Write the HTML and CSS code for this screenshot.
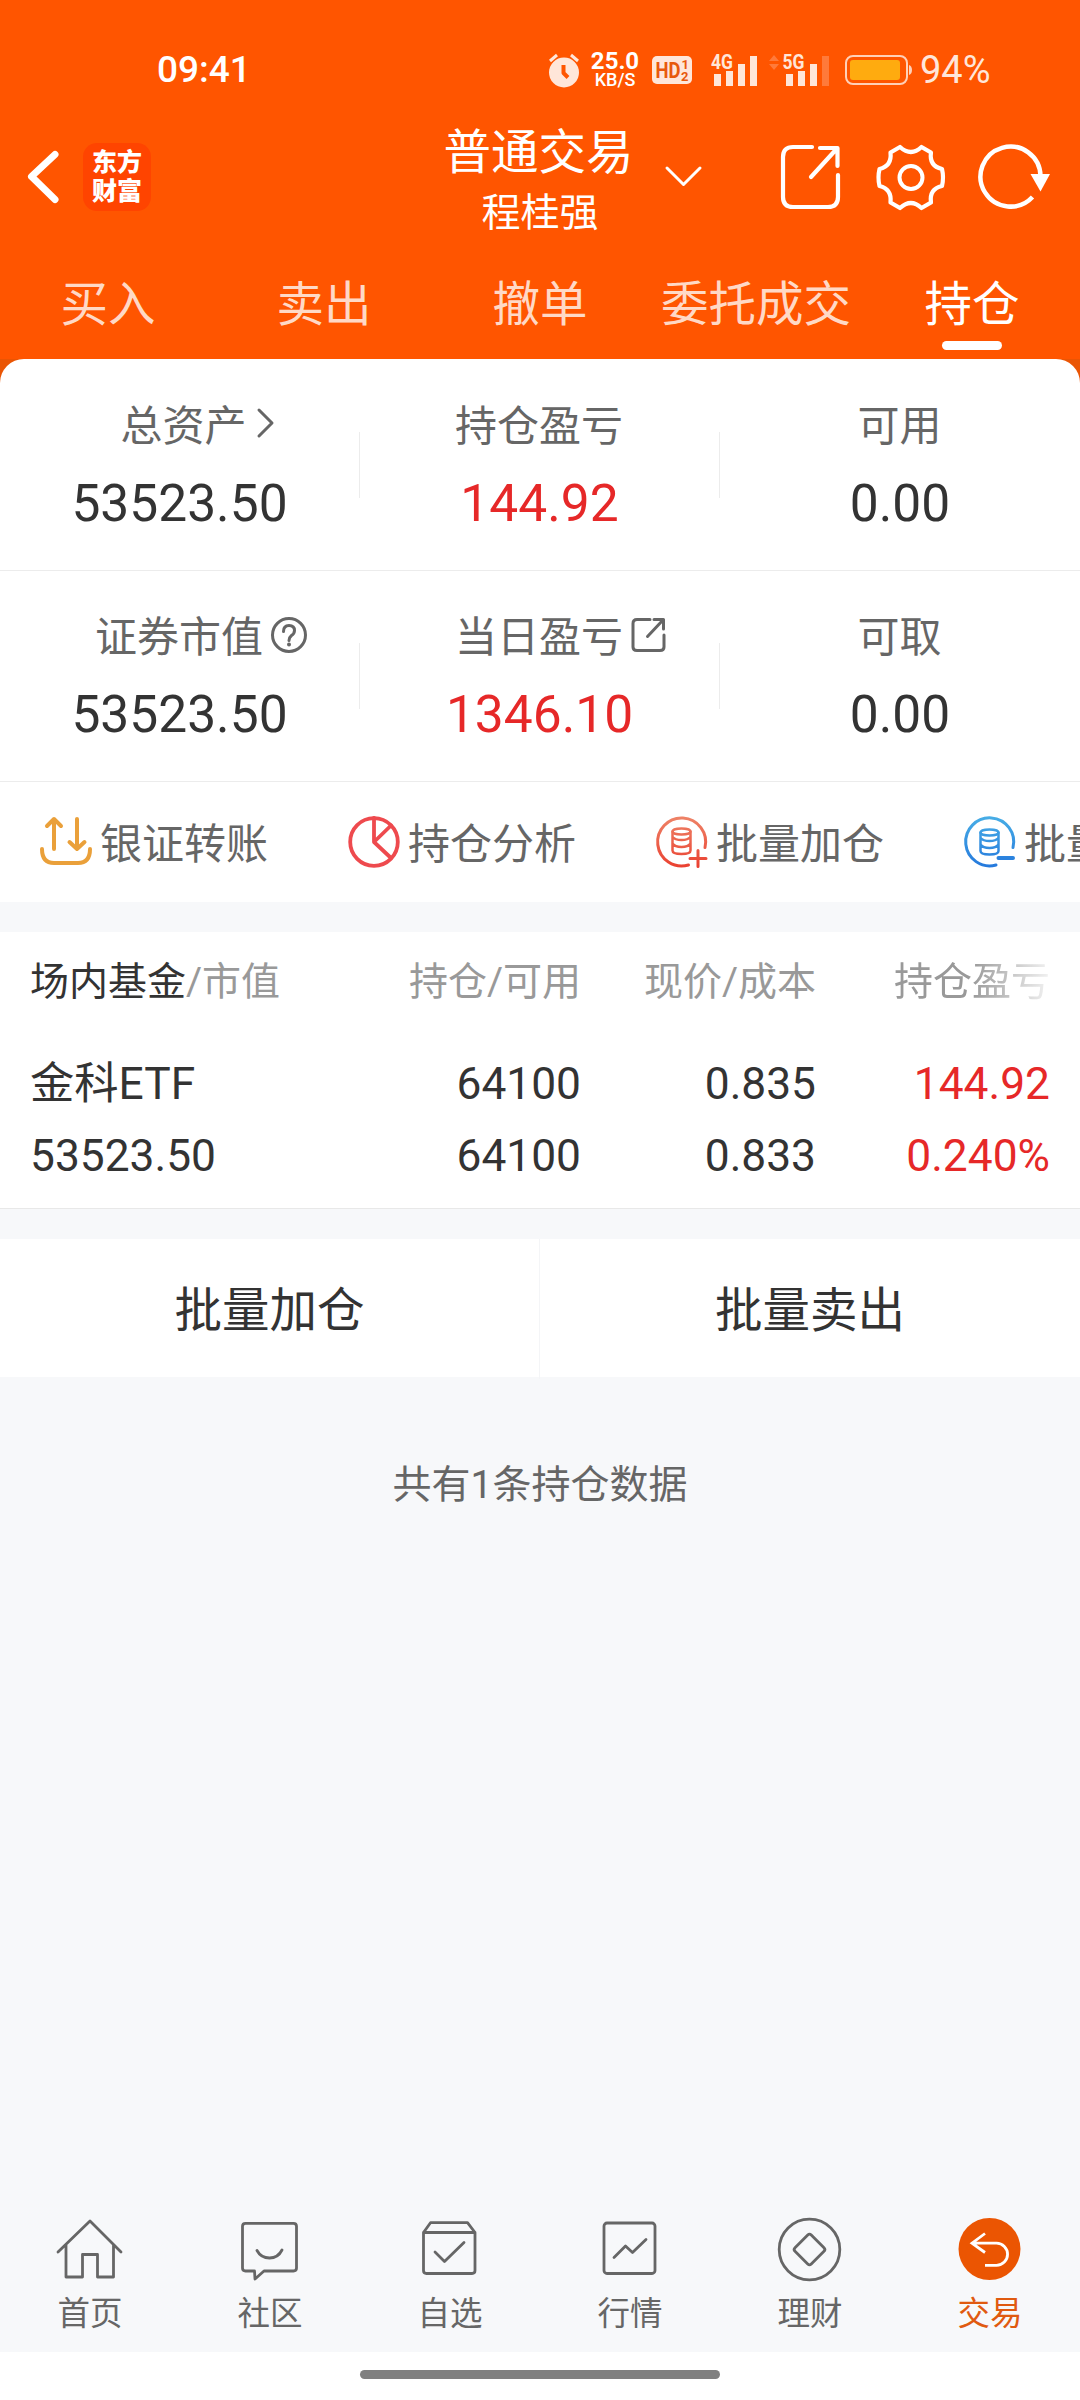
FILE: index.html
```html
<!DOCTYPE html>
<html lang="zh-CN">

<head>
    <meta charset="UTF-8">
    <meta name="viewport" content="width=device-width, initial-scale=1.0">
    <title>普通交易 - 持仓</title>
    <link rel="stylesheet" href="styles.css">
</head>

<body>

    <div class="top">
        <div class="status-bar">
            <span class="time">09:41</span>
            <div class="status-icons">
                <svg class="alarm" width="32" height="34" viewBox="0 0 32 34">
                    <circle cx="16" cy="19.5" r="15" fill="#ffe6d9" />
                    <path d="M2 8 L9 2 M30 8 L23 2" stroke="#ffe6d9" stroke-width="3" fill="none" />
                    <path d="M15.500 12 V20 L20 24.500" stroke="#ff5500" stroke-width="4" fill="none" />
                </svg>
                <div class="speed">
                    <span class="speed-value">25.0</span>
                    <span class="speed-unit">KB/S</span>
                </div>
                <svg class="hd" width="40" height="28" viewBox="0 0 40 28">
                    <rect width="40" height="28" rx="5" fill="#ffe6d9" />
                    <text x="3.500" y="22" font-size="22" textLength="25" lengthAdjust="spacingAndGlyphs">HD</text>
                    <text x="29.500" y="13" font-size="13">1</text>
                    <text x="29" y="25" font-size="13">2</text>
                </svg>
                <svg class="signal" width="47" height="34" viewBox="0 0 47 34">
                    <text x="0" y="15.500" font-size="21" textLength="22" lengthAdjust="spacingAndGlyphs">4G</text>
                    <path d="M3 21h7v12h-7z M15 18h7v15h-7z M27 11h7v22h-7z M39 3h7v30h-7z" />
                </svg>
                <svg class="signal signal-5g" width="61" height="34" viewBox="0 0 61 34">
                    <path class="faint" d="M0 8 L5 2 L10 8z M0 11 L5 17 L10 11z M53 3h7v30h-7z" />
                    <text x="13.500" y="15.500" font-size="21" textLength="22" lengthAdjust="spacingAndGlyphs">5G</text>
                    <path d="M17 21h7v12h-7z M29 18h7v15h-7z M41 11h7v22h-7z" />
                </svg>
                <svg class="battery" width="68" height="30" viewBox="0 0 68 30">
                    <rect x="1" y="1" width="61" height="28" rx="7" fill="none" stroke="#ffd0b8" stroke-width="2" />
                    <rect x="5" y="5" width="50" height="20" rx="3" fill="#ffab0f" />
                    <path d="M64 10 q3 1 3 5 t-3 5z" fill="#ffd0b8" />
                </svg>
                <span class="percent">94%</span>
            </div>
        </div>

        <div class="header">
            <div class="header-left">
                <svg class="back" width="33" height="54" viewBox="0 0 33 54">
                    <path d="M28 4.500 L4.500 26.500 L28 49.500" />
                </svg>
                <div class="logo">东方<br>财富</div>
            </div>
            <div class="title">
                <div class="title-main">普通交易</div>
                <div class="title-name">程桂强</div>
            </div>
            <div class="header-right">
                <svg class="down" width="38" height="22" viewBox="0 0 38 22">
                    <path d="M2 2 L18.500 18.500 L35 2" stroke-width="3" />
                </svg>
                <svg class="share" width="60" height="64" viewBox="0 0 60 64">
                    <path d="M31 2 H12 Q2 2 2 12 V52 Q2 62 12 62 H47 Q57 62 57 52 V30 M39 3 H56.500 V21 M30 32 L56 3.500" stroke-width="4.200" />
                </svg>
                <svg class="gear" width="68" height="65" viewBox="0 0 68 65">
                    <path d="M23 2 Q34 12 44.500 2 L54 7.500 Q52 21 65 24 Q67 32.500 65 41 Q52 44 54 57.500 L44.500 63 Q34 53 23 63 L13.500 57.500 Q15 44 2.500 41 Q0.500 32.500 2.500 24 Q15 21 13.500 7.500 Z" stroke-width="4.200" />
                    <circle cx="34" cy="32.500" r="11.500" stroke-width="4" />
                </svg>
                <svg class="refresh" width="72" height="65" viewBox="0 0 72 65">
                    <path d="M53.500 52 A30 30 0 1 1 61.500 31" stroke-width="4.500" />
                    <path class="solid" d="M51.500 29 H71 L61.500 46.500z" />
                </svg>
            </div>
        </div>

        <div class="tabs">
            <div class="tab">买入</div>
            <div class="tab">卖出</div>
            <div class="tab">撤单</div>
            <div class="tab">委托成交</div>
            <div class="tab active">持仓</div>
        </div>
    </div>

    <div class="summary-wrap">
        <div class="summary">
            <div class="summary-row">
                <div class="cell">
                    <div class="label label-total">总资产<svg class="more" width="18" height="30" viewBox="0 0 18 30">
                            <path d="M2 2 L15 15 L2 28" />
                        </svg></div>
                    <div class="value">53523.50</div>
                </div>
                <div class="divider"></div>
                <div class="cell">
                    <div class="label">持仓盈亏</div>
                    <div class="value red">144.92</div>
                </div>
                <div class="divider"></div>
                <div class="cell">
                    <div class="label">可用</div>
                    <div class="value">0.00</div>
                </div>
            </div>
            <div class="summary-row">
                <div class="cell">
                    <div class="label">证券市值<svg class="hint" width="36" height="36" viewBox="0 0 36 36">
                            <circle cx="18" cy="18" r="16.500" />
                            <path d="M12.500 14.500 Q12.500 8.500 18 8.500 Q23.500 8.500 23.500 13.500 Q23.500 16.500 20.500 18.500 Q18 20.500 18 23.500" />
                            <circle class="dot" cx="18" cy="27.500" r="2" />
                        </svg></div>
                    <div class="value">53523.50</div>
                </div>
                <div class="divider"></div>
                <div class="cell">
                    <div class="label">当日盈亏<svg class="hint" width="36" height="36" viewBox="0 0 36 36">
                            <path d="M19 2.500 H6 Q2 2.500 2 6.500 V30 Q2 33.500 6 33.500 H29 Q33 33.500 33 30 V18 M23 2.500 H32.500 V12 M16.500 19.500 L32 3" />
                        </svg></div>
                    <div class="value red">1346.10</div>
                </div>
                <div class="divider"></div>
                <div class="cell">
                    <div class="label">可取</div>
                    <div class="value">0.00</div>
                </div>
            </div>
        </div>
    </div>

    <div class="tools">
        <div class="tool">
            <svg width="52" height="52" viewBox="0 0 52 52" stroke="#eaa03a" stroke-width="4">
                <path d="M14 3 V33 M7 10 L14 3 L21 10 M37 3 V33 M29.500 26 L37 33 L44.500 26 M2 33 Q2 47 14 47 H38 Q50 47 50 33" />
            </svg>
            <span>银证转账</span>
        </div>
        <div class="tool">
            <svg width="52" height="52" viewBox="0 0 52 52" stroke="#ee4a4e" stroke-width="3.800">
                <circle cx="26" cy="26" r="23.800" />
                <path d="M26 2 V26 L43 9.500 M26 26 L43 42" />
            </svg>
            <span>持仓分析</span>
        </div>
        <div class="tool">
            <svg width="52" height="52" viewBox="0 0 52 52" stroke="url(#red)" stroke-width="3">
                <defs>
                    <linearGradient id="red" gradientUnits="userSpaceOnUse" x1="0" y1="0" x2="0" y2="52">
                        <stop offset="0" stop-color="#ee8468" />
                        <stop offset="1" stop-color="#ea4030" />
                    </linearGradient>
                </defs>
                <path d="M49 31.500 A24 24 0 1 0 32.500 49" />
                <path d="M16.500 15.500 V34.500 Q16.500 38 25.500 38 T34.500 34.500 V15.500 M16.500 21 Q19 24 25.500 24 T34.500 21 M16.500 27.500 Q19 31 25.500 31 T34.500 27.500" stroke-width="2.500" />
                <ellipse cx="25.500" cy="15.500" rx="9" ry="3" stroke-width="2.500" />
                <path d="M34 42.500 H50 M42 34.500 V50.500" />
            </svg>
            <span>批量加仓</span>
        </div>
        <div class="tool">
            <svg width="52" height="52" viewBox="0 0 52 52" stroke="url(#blue)" stroke-width="3">
                <defs>
                    <linearGradient id="blue" gradientUnits="userSpaceOnUse" x1="0" y1="0" x2="0" y2="52">
                        <stop offset="0" stop-color="#48aee6" />
                        <stop offset="1" stop-color="#2478dc" />
                    </linearGradient>
                </defs>
                <path d="M49 31.500 A24 24 0 1 0 32 49" />
                <path d="M16.500 16.500 V35 Q16.500 38.500 25.500 38.500 T34.500 35 V16.500 M16.500 22 Q19 25 25.500 25 T34.500 22 M16.500 28.500 Q19 32 25.500 32 T34.500 28.500" stroke-width="2.500" />
                <ellipse cx="25.500" cy="16.500" rx="9" ry="3" stroke-width="2.500" />
                <path d="M34.500 42 L49 41.900" stroke-width="4" />
            </svg>
            <span>批量卖出</span>
        </div>
    </div>

    <div class="holdings">
        <div class="grid grid-head">
            <div><span class="dark">场内基金</span>/市值</div>
            <div>持仓/可用</div>
            <div>现价/成本</div>
            <div class="fade">持仓盈亏</div>
        </div>
        <div class="grid">
            <div>金科ETF</div>
            <div>64100</div>
            <div>0.835</div>
            <div class="red">144.92</div>
            <div>53523.50</div>
            <div>64100</div>
            <div>0.833</div>
            <div class="red">0.240%</div>
        </div>
    </div>

    <div class="actions">
        <div class="action">批量加仓</div>
        <div class="action">批量卖出</div>
    </div>

    <p class="count">共有1条持仓数据</p>

    <div class="nav">
        <div class="nav-item">
            <svg width="70" height="70" viewBox="0 0 70 70">
                <path d="M3 38 L35 7 L66 38 M11 31 V63 H27.500 V40.500 H42.500 V63 H58.500 V31" />
            </svg>
            <span>首页</span>
        </div>
        <div class="nav-item">
            <svg width="70" height="70" viewBox="0 0 70 70">
                <path d="M10.500 9.300 H58.500 Q61.500 9.300 61.500 12.300 V54 Q61.500 57 58.500 57 H29 L20 65 L19.500 57 H10.500 Q7.500 57 7.500 54 V12.300 Q7.500 9.300 10.500 9.300z M22 36.500 Q26 44 34.500 44 T47 36" />
            </svg>
            <span>社区</span>
        </div>
        <div class="nav-item">
            <svg width="70" height="70" viewBox="0 0 70 70">
                <path d="M8.500 18.500 L15.500 8.700 H52.500 L60 18.500 V56.500 Q60 59.500 57 59.500 H11.500 Q8.500 59.500 8.500 56.500z M8.500 18.500 H60 M20 38 L29.500 47.500 L49 28.500" />
            </svg>
            <span>自选</span>
        </div>
        <div class="nav-item">
            <svg width="70" height="70" viewBox="0 0 70 70">
                <rect x="9" y="9" width="51" height="50.500" rx="3" />
                <path d="M19 43.500 L30.500 32 L37.500 38.500 L51 25.500" />
            </svg>
            <span>行情</span>
        </div>
        <div class="nav-item">
            <svg width="70" height="70" viewBox="0 0 70 70">
                <circle cx="34.500" cy="35.500" r="30.300" />
                <rect x="23" y="24" width="23" height="23" rx="2.500" transform="rotate(45 34.500 35.500)" />
            </svg>
            <span>理财</span>
        </div>
        <div class="nav-item current">
            <svg width="70" height="70" viewBox="0 0 70 70">
                <circle class="disc" cx="34.500" cy="35" r="31" />
                <path class="arrow" d="M30 19.500 L17 29.200 L30 38.500 M17 29.200 H41.500 A11 11 0 0 1 41.500 51.300 H30" />
            </svg>
            <span>交易</span>
        </div>
    </div>

    <div class="home-bar">
        <div class="home-handle"></div>
    </div>

</body>

</html>
```

FILE: styles.css
```css
* {
    box-sizing: border-box;
}

body {
    margin: 0;
    width: 1080px;
    height: 2400px;
    display: flex;
    flex-direction: column;
    overflow: hidden;
    font-family: Roboto, "Noto Sans CJK SC", sans-serif;
    color: #333;
    background-color: #f7f8fa;
}

svg {
    display: block;
    flex: none;
    fill: none;
    overflow: visible;
    stroke-linecap: round;
    stroke-linejoin: round;
}

/* orange header */
.top {
    height: 359px;
    flex: none;
    background-color: #ff5500;
    color: #fff;
}

.status-bar {
    height: 118px;
    padding: 21px 86px 0 157px;
    display: flex;
    align-items: center;
    justify-content: space-between;
    font-size: 37px;
}

.time {
    font-weight: 500;
}

.status-icons {
    display: flex;
    align-items: center;
    color: #ffe6d9;
}

.status-icons svg {
    stroke-linecap: butt;
}

.speed {
    width: 52px;
    margin: 0 11px 0 9px;
    display: flex;
    flex-direction: column;
    align-items: center;
    color: #fff;
    font-weight: 700;
}

.speed-value {
    font-size: 24px;
    line-height: 20px;
}

.speed-unit {
    font-size: 18px;
    line-height: 18px;
    font-weight: 500;
}

.hd {
    margin-right: 19px;
}

.hd text {
    fill: #e8590c;
    font-weight: 700;
}

.signal {
    margin-right: 11px;
    fill: #ffe6d9;
    font-weight: 700;
}

.signal-5g {
    margin-right: 15px;
}

.signal .faint {
    fill: #ff7a3a;
}

.percent {
    width: 74px;
    margin-left: 7px;
    font-size: 38px;
}

.header {
    height: 118px;
    display: grid;
    grid-template-columns: 446px 188px 446px;
    grid-template-rows: 118px;
    align-items: center;
}

.header-left,
.header-right {
    display: flex;
    align-items: center;
}

.header svg {
    stroke: #fff;
}

.back {
    margin: 0 23px 0 27px;
    stroke-width: 7;
}

.logo {
    width: 68px;
    height: 68px;
    padding-top: 5px;
    border-radius: 14px;
    background-color: #ff4400;
    font-size: 25px;
    line-height: 29px;
    font-weight: 900;
    text-align: center;
}

.title {
    align-self: start;
    padding-top: 5px;
    text-align: center;
    white-space: nowrap;
}

.title-main {
    margin-left: -3px;
    font-size: 47.5px;
    line-height: 60px;
}

.title-name {
    margin-top: 5px;
    font-size: 39px;
    line-height: 50px;
}

.down {
    margin: 0 78px 0 31px;
}

.share {
    margin-right: 36px;
}

.gear {
    margin-right: 34px;
}

.refresh {
    stroke-linecap: butt;
}

.refresh .solid {
    fill: #fff;
    stroke: none;
}

.tabs {
    display: grid;
    grid-template-columns: repeat(5, 1fr);
    padding-top: 39px;
}

.tab {
    display: flex;
    flex-direction: column;
    align-items: center;
    font-size: 47.5px;
    line-height: 60px;
    color: #ffd9c6;
}

.tab.active {
    color: #fff;
}

.tab.active::after {
    content: "";
    width: 60px;
    height: 9px;
    margin-top: 6px;
    border-radius: 5px;
    background-color: #fff;
}

/* account summary */
.summary-wrap {
    flex: none;
    background-color: #ea5504;
}

.summary {
    padding-top: 1px;
    background-color: #fff;
    border-radius: 24px 24px 0 0;
}

.summary-row {
    height: 211px;
    display: grid;
    grid-template-columns: 359px 1px 359px 1px 360px;
    align-items: center;
    border-bottom: 1px solid #ececec;
}

.cell {
    height: 210px;
    padding-top: 37px;
}

.divider {
    height: 66px;
    background-color: #ececec;
}

.label {
    display: flex;
    justify-content: center;
    align-items: center;
    margin-left: -1px;
    font-size: 42px;
    line-height: 60px;
    color: #666;
}

.label-total {
    padding-left: 9px;
}

/* icons hang outside so the caption itself stays centred */
.label svg {
    stroke: #666;
    stroke-width: 3;
    margin: -6px -44px 0 8px;
}

.label .more {
    margin: -8px -28px 0 10px;
}

.label .dot {
    fill: #666;
    stroke: none;
}

.value {
    margin-top: 17px;
    font-size: 51.5px;
    line-height: 60px;
    text-align: center;
}

.red {
    color: #e62828;
}

/* shortcuts */
.tools {
    height: 120px;
    flex: none;
    display: flex;
    align-items: center;
    gap: 80px;
    padding-left: 40px;
    background-color: #fff;
    overflow: hidden;
}

.tool {
    flex: none;
    display: flex;
    align-items: center;
    gap: 8px;
    font-size: 42px;
    line-height: 60px;
    color: #666;
}

.tool span {
    padding-top: 5px;
}

/* holdings table */
.holdings {
    flex: none;
    height: 277px;
    margin-top: 30px;
    padding: 25px 30px 0;
    background-color: #fff;
    border-bottom: 1px solid #e8e8e8;
}

.grid {
    display: grid;
    grid-template-columns: 316px 235px 235px 234px;
    row-gap: 12px;
    font-size: 44.3px;
    line-height: 60px;
    text-align: right;
    white-space: nowrap;
}

.grid div:nth-child(4n + 1) {
    text-align: left;
}

.grid-head {
    margin-bottom: 47px;
    font-size: 39px;
    line-height: 50px;
    color: #999;
}

.dark {
    color: #333;
}

.fade {
    -webkit-mask-image: linear-gradient(to right, #000 155px, transparent 245px);
    mask-image: linear-gradient(to right, #000 155px, transparent 245px);
}

.actions {
    flex: none;
    height: 138px;
    margin-top: 30px;
    display: grid;
    grid-template-columns: 540px 540px;
    background-color: #fff;
}

.action {
    padding-top: 4px;
    font-size: 47.5px;
    line-height: 136px;
    text-align: center;
}

.action:first-child {
    border-right: 1px solid #f4f5f7;
}

.count {
    flex: none;
    margin: 83px 0 0;
    font-size: 39px;
    line-height: 50px;
    text-align: center;
    color: #666;
}

/* bottom navigation */
.nav {
    flex: none;
    height: 148px;
    margin-top: auto;
    padding-top: 10px;
    display: grid;
    grid-template-columns: repeat(6, 1fr);
}

.nav-item {
    display: flex;
    flex-direction: column;
    align-items: center;
    gap: 10px;
    font-size: 32.5px;
    line-height: 40px;
    color: #666;
}

.nav-item svg {
    stroke: #666;
    stroke-width: 2.8;
}

.nav-item.current {
    color: #e05a10;
}

.nav-item .disc {
    fill: #eb5502;
    stroke: none;
}

.nav-item .arrow {
    stroke: #fff;
    stroke-linecap: butt;
    stroke-linejoin: miter;
}

.home-bar {
    flex: none;
    height: 48px;
    padding-top: 18px;
    background-color: #fff;
}

.home-handle {
    width: 360px;
    height: 9px;
    margin: 0 auto;
    border-radius: 5px;
    background-color: #808080;
}
```
